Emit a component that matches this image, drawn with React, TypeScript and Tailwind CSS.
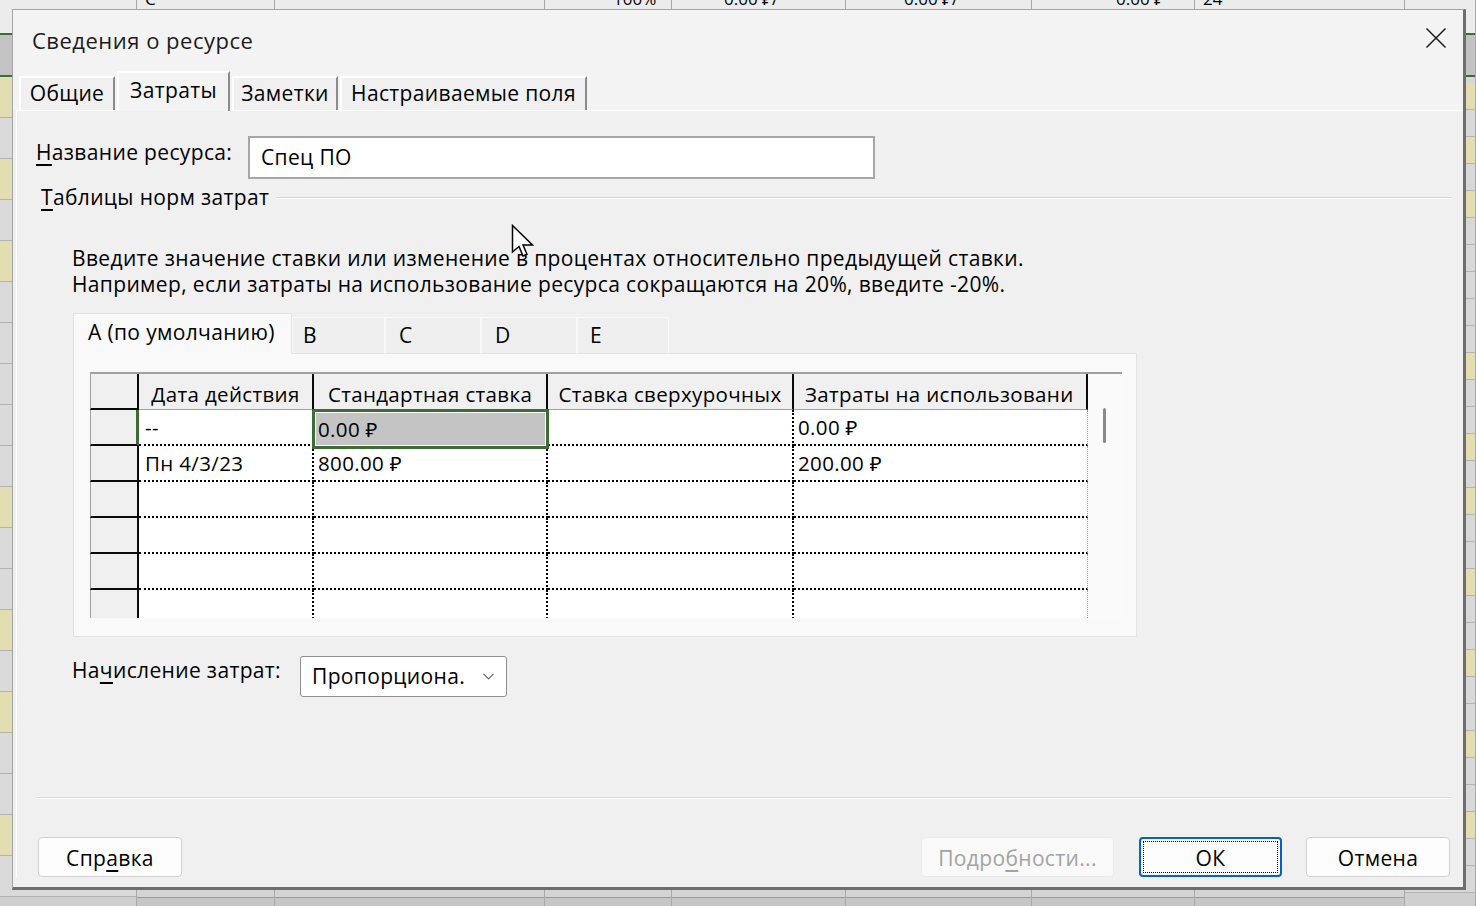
import React from "react";
import { ChevronDown } from "lucide-react";

const font = "font-['Open_Sans','Noto_Sans',sans-serif]";

const bgCols = [137, 138, 270, 127, 174, 186, 163, 210, 71];

const leftYellow = [0, 2, 4, 10, 13, 15, 18];
const rightYellow = [0, 2, 4, 10, 13, 15, 18, 21, 24, 27];

function U({ children }: { children: React.ReactNode }) {
  return <span className="underline decoration-[1.5px] underline-offset-[4px]">{children}</span>;
}

function Background() {
  return (
    <div className="absolute inset-0 flex bg-[#cfcfcf]">
      {bgCols.map((w, i) => (
        <div
          key={"col" + i}
          style={{ width: w }}
          className="flex h-full shrink-0 flex-col border-r border-[#a9a9a9]"
        >
          <div className="h-[33px] overflow-hidden bg-[#ececec] text-[17px] text-black">
            <div className="-mt-[11px] whitespace-nowrap pl-[8px] leading-[20px]">
              {i === 1 && "С"}
              {i === 3 && <span className="pl-[60px]">100%</span>}
              {i === 4 && <span className="pl-[44px]">0.00 ₽/</span>}
              {i === 5 && <span className="pl-[50px]">0.00 ₽/</span>}
              {i === 6 && <span className="pl-[76px]">0.00 ₽</span>}
              {i === 7 && "24"}
            </div>
          </div>
          <div className="h-[44px] border-y-2 border-[#3e6b36] bg-[#c3c3c3]" />
          {i === 0 &&
            Array.from({ length: 20 }).map((_, r) => (
              <div
                key={"l" + r}
                className={
                  "h-[41px] shrink-0 border-b border-[#b3b3b3] " +
                  (leftYellow.includes(r) ? "bg-[#e3ddb2]" : "bg-[#dadada]")
                }
              />
            ))}
          {i === 8 && (
            <>
              <div className="h-[6px] shrink-0 bg-[#d8d8d8]" />
              {Array.from({ length: 30 }).map((_, r) => (
                <div
                  key={"r" + r}
                  className={
                    "h-[27px] shrink-0 border-b border-[#b3b3b3] " +
                    (rightYellow.includes(r) ? "bg-[#e3ddb2]" : "bg-[#d8d8d8]")
                  }
                />
              ))}
            </>
          )}
          {i > 0 && i < 8 && (
            <>
              <div className="h-[821px] shrink-0 border-b border-[#9c9c9c] bg-[#d4d4d4]" />
              <div className="flex-1 bg-[#c6c6c6]" />
            </>
          )}
        </div>
      ))}
    </div>
  );
}

function Cursor() {
  return (
    <svg
      className="absolute left-[511px] top-[224px]"
      width="26"
      height="36"
      viewBox="0 0 26 36"
    >
      <path
        d="M1.5 1.5 L1.5 28 L8 22.5 L12 32 L16 30.3 L12 21 L21.5 21 Z"
        fill="white"
        stroke="black"
        strokeWidth="1.5"
        strokeLinejoin="miter"
      />
    </svg>
  );
}

function OuterTab({ label, w, selected }: { label: string; w: string; selected?: boolean }) {
  return (
    <div
      className={
        "ml-[2px] flex items-center justify-center whitespace-nowrap border-2 border-b-0 border-white border-r-[#8c8c8c] " +
        w +
        (selected ? " relative z-10 -mb-px h-[40px] bg-[#f3f3f3] pb-[2px]" : " h-[34px] bg-[#f0f0f0]")
      }
    >
      {label}
    </div>
  );
}

function RateTab({ label, w, pl, selected }: { label: string; w: string; pl: string; selected?: boolean }) {
  return (
    <div
      className={
        "flex items-center whitespace-nowrap border border-b-0 " +
        w +
        " " +
        pl +
        (selected
          ? " relative z-10 -mb-px h-[41px] border-[#e3e3e3] bg-[#f9f9f9] pb-[2px]"
          : " h-[36px] border-[#f9f9f9] bg-[#efefef]")
      }
    >
      {label}
    </div>
  );
}

const colW = ["w-[175px]", "w-[234px]", "w-[246px]", "w-[294px]"];

function RateTable() {
  const rows = [
    ["--", "0.00 ₽", "", "0.00 ₽"],
    ["Пн 4/3/23", "800.00 ₽", "", "200.00 ₽"],
    ["", "", "", ""],
    ["", "", "", ""],
    ["", "", "", ""],
    ["", "", "", ""],
  ];
  const heads = ["Дата действия", "Стандартная ставка", "Ставка сверхурочных", "Затраты на использовани"];

  return (
    <div className="flex h-[246px] w-[1032px] overflow-hidden border-t-2 border-[#a0a0a0] text-[20.5px] text-black">
      <div className="flex w-[998px] shrink-0 flex-col">
        <div className="flex h-[36px] shrink-0">
          <div className="w-[49px] shrink-0 border-b-2 border-l border-r-2 border-[#0a0a0a] border-l-[#a0a0a0] bg-[#f0f0f0]" />
          {heads.map((h, i) => (
            <div
              key={"h" + i}
              className={
                colW[i] +
                " flex shrink-0 items-center overflow-hidden whitespace-nowrap border-b border-r-2 border-[#0a0a0a] border-b-[#a0a0a0] bg-[#f0f0f0] pt-[6px] " +
                (i === 3 ? "pl-[11px]" : "justify-center")
              }
            >
              {h}
            </div>
          ))}
        </div>
        {rows.map((r, ri) => (
          <div key={"r" + ri} className="flex h-[36px] shrink-0">
            <div
              className={
                "w-[49px] shrink-0 border-b-2 border-l border-r-2 border-[#0a0a0a] border-l-[#a0a0a0] bg-[#f0f0f0] " +
                (ri === 0 ? "border-r-[3px] border-r-[#3e6b36]" : "")
              }
            />
            {r.map((c, ci) => (
              <div
                key={"c" + ci}
                className={
                  colW[ci] +
                  " relative flex shrink-0 items-center whitespace-nowrap border-b-2 border-dotted border-black bg-white " +
                  (ci < 3 ? "border-r-2 " : "border-r border-r-solid border-r-[#9a9a9a] ") +
                  (ci === 0 ? "pl-[6px]" : "pl-[4px]")
                }
              >
                {ri === 0 && ci === 1 ? (
                  <div className="absolute -left-[2px] -top-[1px] z-10 flex h-[40px] w-[237px] items-center border-[3px] border-[#3e6b36] bg-[#c4c4c4] pl-[3px] shadow-[inset_0_0_0_1px_white]">
                    {c}
                  </div>
                ) : (
                  c
                )}
              </div>
            ))}
          </div>
        ))}
      </div>
      <div className="w-[34px] shrink-0 bg-[#fafafa] pl-[15px] pt-[34px]">
        <div className="h-[35px] w-[3px] rounded-full bg-[#8a8a8a]" />
      </div>
    </div>
  );
}

function Btn({
  children,
  w,
  extra,
}: {
  children: React.ReactNode;
  w: string;
  extra?: string;
}) {
  return (
    <div
      className={
        "flex h-[40px] items-center justify-center rounded-[4px] pt-[3px] " +
        w +
        " " +
        (extra ?? "border border-[#d0d0d0] bg-[#fdfdfd] text-black")
      }
    >
      {children}
    </div>
  );
}

export default function App() {
  return (
    <div className={"relative h-[906px] w-[1476px] overflow-hidden " + font}>
      <Background />

      <div className="absolute left-[12px] top-[9px] flex h-[881px] w-[1454px] flex-col border-b-[3px] border-l border-r-[3px] border-t border-[#a3a3a3] border-b-[#6e6e6e] border-r-[#6e6e6e] bg-[#f0f0f0] text-[21px] tracking-[0.35px] text-black">
        <div className="flex h-[61px] shrink-0 items-center justify-between bg-[#f3f3f3] pl-[19px] pr-[16px]">
          <span className="text-[22px] tracking-[0.5px] text-[#1b1b1b]">Сведения о ресурсе</span>
          <svg width="22" height="22" viewBox="0 0 22 22" className="mb-[6px]">
            <path d="M1.5 1.5 L20.5 20.5 M20.5 1.5 L1.5 20.5" stroke="#1b1b1b" strokeWidth="1.5" />
          </svg>
        </div>

        <div className="flex h-[39px] shrink-0 items-end bg-[#f3f3f3] pl-[4px]">
          <OuterTab label="Общие" w="w-[96px]" />
          <OuterTab label="Затраты" w="w-[113px]" selected />
          <OuterTab label="Заметки" w="w-[106px]" />
          <OuterTab label="Настраиваемые поля" w="w-[247px]" />
        </div>

        <div className="mb-[10px] ml-[3px] flex flex-1 flex-col border-l border-t border-white bg-[#f0f0f0]">
          <div className="mt-[25px] flex items-start pl-[19px]">
            <div className="w-[212px] shrink-0 leading-[32px]">
              <U>Н</U>азвание ресурса:
            </div>
            <div className="flex h-[43px] w-[627px] items-center border-2 border-[#a6a6a6] bg-white pl-[11px]">
              Спец ПО
            </div>
          </div>

          <div className="ml-[24px] mr-[11px] mt-[6px] flex h-[26px] items-center">
            <span className="whitespace-nowrap">
              <U>Т</U>аблицы норм затрат
            </span>
            <div className="ml-[7px] h-[2px] flex-1 border-t border-b border-t-[#d6d6d6] border-b-white" />
          </div>

          <div className="ml-[55px] mt-[34px] leading-[26px]">
            <div>Введите значение ставки или изменение в процентах относительно предыдущей ставки.</div>
            <div>Например, если затраты на использование ресурса сокращаются на 20%, введите -20%.</div>
          </div>

          <div className="ml-[56px] mt-[16px] flex h-[40px] items-end">
            <RateTab label="А (по умолчанию)" w="w-[219px]" pl="pl-[14px]" selected />
            <RateTab label="B" w="w-[93px]" pl="pl-[10px]" />
            <RateTab label="C" w="w-[96px]" pl="pl-[13px]" />
            <RateTab label="D" w="w-[96px]" pl="pl-[13px]" />
            <RateTab label="E" w="w-[92px]" pl="pl-[12px]" />
          </div>
          <div className="ml-[56px] h-[284px] w-[1064px] border border-[#e3e3e3] bg-[#f9f9f9] pl-[16px] pt-[18px]">
            <RateTable />
          </div>

          <div className="ml-[55px] mt-[19px] flex items-start">
            <div className="w-[228px] shrink-0 leading-[28px]">
              На<U>ч</U>исление затрат:
            </div>
            <div className="flex h-[41px] w-[207px] items-center justify-between rounded-[3px] border border-[#8f8f8f] bg-white pl-[11px] pr-[8px]">
              <span className="whitespace-nowrap">Пропорциона.</span>
              <ChevronDown size={19} strokeWidth={1.3} color="#5f5f5f" />
            </div>
          </div>

          <div className="ml-[19px] mr-[11px] mt-[100px] h-[2px] border-t border-b border-t-[#d9d9d9] border-b-white" />

          <div className="mt-[38px] flex items-center justify-between pl-[21px] pr-[13px]">
            <Btn w="w-[144px]">
              Спр<U>а</U>вка
            </Btn>
            <div className="flex items-center">
              <Btn w="w-[193px]" extra="border border-[#ebebeb] bg-[#f9f9f9] text-[#a3a3a3]">
                Подро<U>б</U>ности...
              </Btn>
              <div className="ml-[25px] flex h-[40px] w-[143px] items-center justify-center rounded-[4px] border-2 border-[#0063c1] bg-[#fdfdfd] p-[2px]">
                <div className="flex h-full w-full items-center justify-center border border-dotted border-black pt-[3px]">
                  ОК
                </div>
              </div>
              <div className="ml-[24px]">
                <Btn w="w-[144px]">Отмена</Btn>
              </div>
            </div>
          </div>
        </div>
      </div>

      <Cursor />
    </div>
  );
}
